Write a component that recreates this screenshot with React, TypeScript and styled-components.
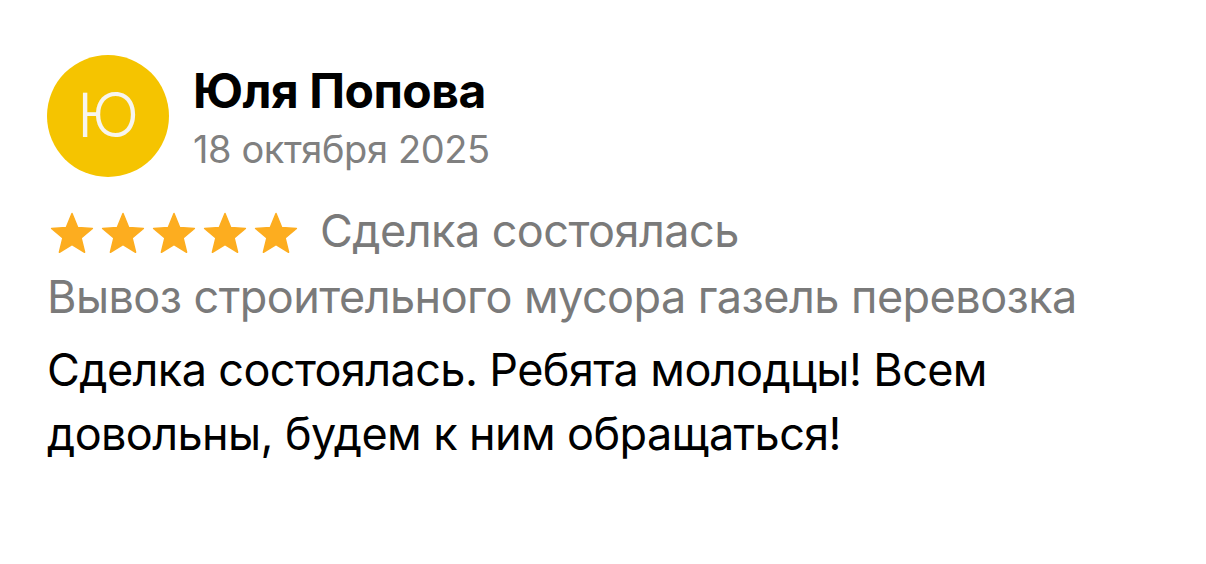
import React from 'react'
import styled, { createGlobalStyle } from 'styled-components'

const GlobalStyle = createGlobalStyle`
    html, body {
        margin: 0;
        padding: 0;
        background: #ffffff;
    }
    body {
        font-family: Inter, "Noto Sans", sans-serif;
        -webkit-font-smoothing: antialiased;
    }
`

const ReviewCard = styled.div`
    width: 1206px;
    height: 564px;
    box-sizing: border-box;
    padding: 55px 48px 0 47px;
    display: flex;
    flex-direction: column;
`

const Header = styled.div`
    display: flex;
    align-items: flex-start;
    gap: 24px;
`

const Avatar = styled.div`
    width: 122px;
    height: 122px;
    border-radius: 50%;
    background: #f5c400;
    color: #f7f5ee;
    display: flex;
    align-items: center;
    justify-content: center;
    font-size: 62px;
    font-weight: 300;
    flex-shrink: 0;
    padding-bottom: 4px;
    box-sizing: border-box;
`

const AuthorInfo = styled.div`
    display: flex;
    flex-direction: column;
    gap: 10px;
    padding-top: 10px;
`

const AuthorName = styled.div`
    font-size: 48px;
    font-weight: 700;
    color: #000000;
    letter-spacing: -0.5px;
    line-height: 52px;
`

const ReviewDate = styled.div`
    font-size: 38px;
    color: #808080;
    letter-spacing: -0.4px;
    line-height: 44px;
`

const RatingRow = styled.div`
    display: flex;
    align-items: center;
    gap: 22px;
    margin-top: 28px;
    height: 52px;
`

const Stars = styled.div`
    display: flex;
    gap: 7px;
    padding-left: 3px;
    padding-top: 4px;
`

const Status = styled.div`
    font-size: 45px;
    color: #7a7a7a;
    letter-spacing: -0.55px;
    line-height: 52px;
`

const ServiceName = styled.div`
    font-size: 45px;
    color: #7a7a7a;
    letter-spacing: -0.55px;
    line-height: 52px;
    margin-top: 14px;
`

const ReviewText = styled.div`
    font-size: 45px;
    color: #000000;
    letter-spacing: -0.6px;
    line-height: 64px;
    margin-top: 15px;
    width: 1000px;
`

const Star = () => (
    <svg width="44" height="42" viewBox="0 0 44 42">
        <path
            d="M22 1.5L27.6 15.4 42.4 16.4 31.1 26 34.6 40.3 22 32.5 9.4 40.3 12.9 26 1.6 16.4 16.4 15.4Z"
            fill="#fdad1f"
            stroke="#fdad1f"
            strokeWidth="1.5"
            strokeLinejoin="round"
        />
    </svg>
)

const App: React.FC = () => {
    return (
        <>
            <GlobalStyle />
            <ReviewCard>
                <Header>
                    <Avatar>Ю</Avatar>
                    <AuthorInfo>
                        <AuthorName>Юля Попова</AuthorName>
                        <ReviewDate>18 октября 2025</ReviewDate>
                    </AuthorInfo>
                </Header>
                <RatingRow>
                    <Stars>
                        {[0, 1, 2, 3, 4].map((i) => <Star key={i} />)}
                    </Stars>
                    <Status>Сделка состоялась</Status>
                </RatingRow>
                <ServiceName>Вывоз строительного мусора газель перевозка</ServiceName>
                <ReviewText>
                    Сделка состоялась. Ребята молодцы! Всем довольны, будем к ним обращаться!
                </ReviewText>
            </ReviewCard>
        </>
    )
}

export default App
